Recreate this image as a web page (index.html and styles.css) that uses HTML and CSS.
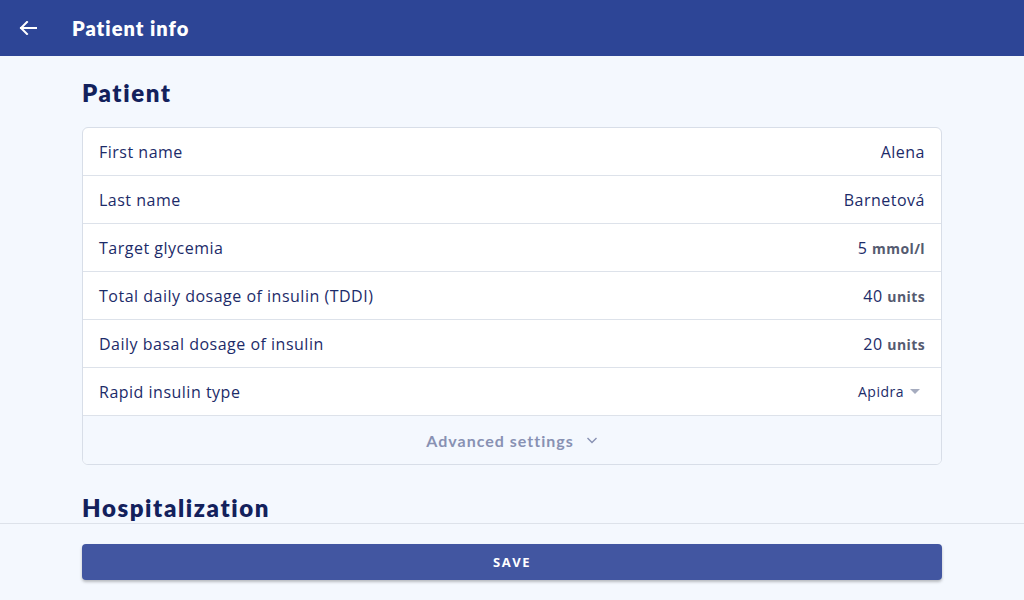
FILE: index.html
```html
<!DOCTYPE html>
<html lang="en">
<head>
<meta charset="utf-8">
<title>Patient info</title>
<link rel="stylesheet" href="styles.css">
</head>
<body>
<div class="app">
  <header class="topbar">
    <button class="back" aria-label="Back">
      <svg width="18" height="14" viewBox="0 0 18 14"><path d="M17.5 7H2 M8 1L2 7l6 6" fill="none" stroke="#fff" stroke-width="2" stroke-linecap="square"/></svg>
    </button>
    <h1 class="title">Patient info</h1>
  </header>
  <main class="content">
    <div class="inner">
      <h2 class="section">Patient</h2>
      <div class="card">
        <div class="row"><span class="label">First name</span><span class="value">Alena</span></div>
        <div class="row"><span class="label">Last name</span><span class="value">Barnetová</span></div>
        <div class="row"><span class="label">Target glycemia</span><span class="value">5 <b class="unit">mmol/l</b></span></div>
        <div class="row"><span class="label">Total daily dosage of insulin (TDDI)</span><span class="value">40 <b class="unit">units</b></span></div>
        <div class="row"><span class="label">Daily basal dosage of insulin</span><span class="value">20 <b class="unit">units</b></span></div>
        <div class="row"><span class="label">Rapid insulin type</span><span class="value select">Apidra <span class="caret"></span></span></div>
        <div class="advanced">Advanced settings
          <svg width="12" height="12" viewBox="0 0 12 12"><path d="M1.5 4l4.5 4.5L10.5 4" fill="none" stroke="#8891b3" stroke-width="1.4"/></svg>
        </div>
      </div>
      <h2 class="section">Hospitalization</h2>
    </div>
  </main>
  <footer class="footer">
    <button class="save">SAVE</button>
  </footer>
</div>
</body>
</html>
```
FILE: styles.css
```css
* { box-sizing: border-box; }
html, body { margin: 0; padding: 0; }
body {
  font-family: "Open Sans", "Noto Sans", sans-serif;
  background: #f4f8fe;
  color: #1c2b69;
}
.app {
  display: flex;
  flex-direction: column;
  height: 100vh;
  overflow: hidden;
}
.topbar {
  flex: 0 0 56px;
  background: #2d4596;
  display: flex;
  align-items: center;
  padding-left: 19px;
}
.back {
  background: none;
  border: 0;
  padding: 0;
  width: 18px;
  height: 14px;
  display: flex;
  cursor: pointer;
}
.title {
  margin: 0 0 0 35px;
  color: #fff;
  font-size: 20px;
  font-weight: 800;
  font-family: "Lato", sans-serif;
  letter-spacing: 1px;
}
.content {
  flex: 1;
  overflow: hidden;
}
.inner {
  width: 860px;
  margin: 0 auto;
  padding-top: 22px;
}
.section {
  margin: 0;
  font-family: "Lato", sans-serif;
  font-weight: 800;
  font-size: 24px;
  line-height: 30px;
  color: #13215c;
  letter-spacing: 1.6px;
}
.card {
  margin: 19px 0 28px;
  background: #fff;
  border: 1px solid #d8dee8;
  border-radius: 6px;
  overflow: hidden;
}
.row {
  height: 48px;
  display: flex;
  align-items: center;
  justify-content: space-between;
  padding: 0 16px;
  border-bottom: 1px solid #dde2ea;
  font-size: 16px;
  letter-spacing: 0.5px;
}
.label { color: #1c2b69; }
.value { color: #1c2b69; }
.unit { font-size: 14px; font-weight: 700; color: #555b70; letter-spacing: 0.4px; }
.select { display: flex; align-items: center; gap: 4px; font-size: 14px; padding-right: 5px; }
.caret {
  width: 0; height: 0;
  border-left: 5px solid transparent;
  border-right: 5px solid transparent;
  border-top: 5px solid #a6acbf;
  margin-left: 2px;
}
.advanced {
  height: 48px;
  background: #f4f8fe;
  display: flex;
  align-items: center;
  justify-content: center;
  gap: 12px;
  font-family: "Lato", sans-serif;
  font-weight: 700;
  font-size: 16px;
  letter-spacing: 1px;
  color: #8891b3;
}
.footer {
  flex: 0 0 77px;
  border-top: 1px solid #dde2ea;
  background: #f4f8fe;
  display: flex;
  justify-content: center;
  padding-top: 20px;
}
.save {
  width: 860px;
  height: 36px;
  background: #4256a1;
  color: #fff;
  border: 0;
  border-radius: 4px;
  box-shadow: 0 2px 3px rgba(0,0,0,0.25);
  font-family: "Open Sans", sans-serif;
  font-weight: 700;
  font-size: 13px;
  letter-spacing: 1.5px;
}
```
